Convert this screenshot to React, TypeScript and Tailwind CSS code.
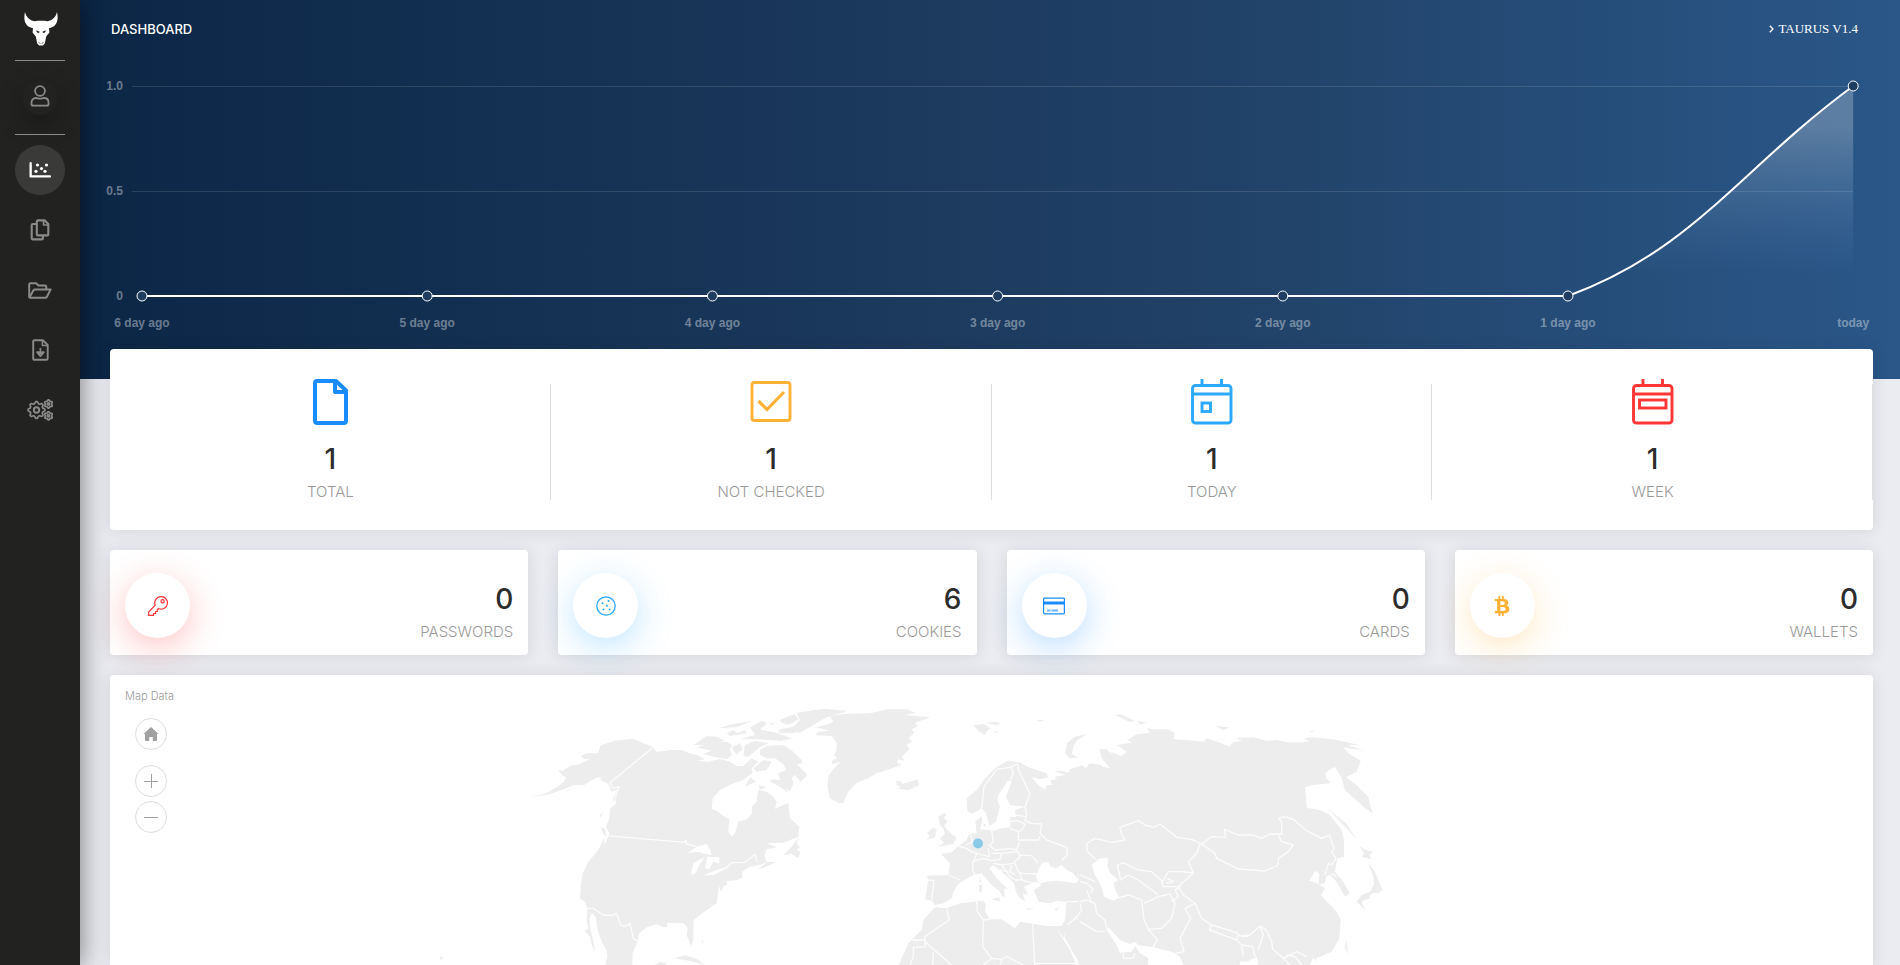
import type { ReactNode } from "react";
import { FaBtc } from "react-icons/fa";

type IconProps = { className?: string };

function BullLogo() {
  return (
    <svg viewBox="0 0 34 34" className="w-[34px] h-[34px] fill-white">
      <path d="M1 0C-.6 7 .6 13.5 6.5 15.6L9 16.2 8.600 20.500 11.800 24.500 13.200 31.500 15.200 33.600H18.800L20.800 31.500 22.200 24.500 25.400 20.500 25 16.200 27.500 15.600C33.400 13.500 34.600 7 33 0 31.600 5.500 28.500 8.300 23.500 9.200 19.500 8.600 14.500 8.600 10.500 9.200 5.500 8.300 2.400 5.500 1 0Z" />
      <path d="M12 18.200 15.600 19.800 15 21 13 20.500ZM22 18.200 18.400 19.800 19 21 21 20.500Z" fill="#222220" />
      <path d="M15 30.500 16 31.600M19 30.500 18 31.600" stroke="#222220" strokeWidth="1" />
    </svg>
  );
}

function UserIcon({ className }: IconProps) {
  return (
    <svg viewBox="0 0 20 22" className={className} fill="none" stroke="currentColor" strokeWidth="1.8">
      <circle cx="10" cy="6" r="4.900" />
      <path d="M6 13C3.200 13 1.500 15 1.500 17.500V19C1.500 20 2 20.700 3 20.700H17C18 20.700 18.500 20 18.500 19V17.500C18.500 15 16.800 13 14 13 12.600 13 11.800 13.700 10 13.700S7.400 13 6 13Z" />
    </svg>
  );
}

function ScatterIcon({ className }: IconProps) {
  return (
    <svg viewBox="0 0 22 16" className={className} fill="currentColor">
      <path d="M.5 1.200A1 1 0 0 1 2.800 1.200V13.200H21A1 1 0 0 1 21 15.500H1.500A1 1 0 0 1 .5 14.500Z" />
      <circle cx="8.500" cy="3" r="1.600" />
      <circle cx="17.500" cy="3" r="1.600" />
      <circle cx="12.500" cy="6.600" r="1.600" />
      <circle cx="7" cy="9.300" r="1.600" />
      <circle cx="16" cy="9.300" r="1.600" />
    </svg>
  );
}

function CopyIcon({ className }: IconProps) {
  return (
    <svg viewBox="0 0 20 22" className={className} fill="none" stroke="currentColor" strokeWidth="2.100" strokeLinejoin="round">
      <path d="M8 1.400H14.800L18.300 4.900V15.200Q18.300 16.400 17.100 16.400H8Q6.800 16.400 6.800 15.200V2.600Q6.800 1.400 8 1.400Z" />
      <path d="M13.600 1.400V6H18.300" strokeWidth="1.700" />
      <path d="M6.500 5H2.900Q1.700 5 1.700 6.200V19.200Q1.700 20.400 2.900 20.400H11.700Q12.900 20.400 12.900 19.200V16.800" />
    </svg>
  );
}

function FolderIcon({ className }: IconProps) {
  return (
    <svg viewBox="0 0 24 17" className={className} fill="none" stroke="currentColor" strokeWidth="2" strokeLinejoin="round">
      <path d="M1.200 15V2.500Q1.200 1.200 2.500 1.200H8.200L10.500 3.600H17Q18.300 3.600 18.300 4.900V7.400" />
      <path d="M1.400 15.600 5.500 8.200Q6 7.400 7 7.400H22.700L18.900 14.800Q18.400 15.800 17.400 15.800H2Q1.200 15.800 1.200 15" />
    </svg>
  );
}

function FileDownIcon({ className }: IconProps) {
  return (
    <svg viewBox="0 0 17 22" className={className} fill="none" stroke="currentColor" strokeWidth="1.900" strokeLinejoin="round">
      <path d="M2.200 1.200H10.800L15.700 6V19.500Q15.700 20.800 14.400 20.800H2.500Q1.200 20.800 1.200 19.500V2.400Q1.200 1.200 2.400 1.200Z" />
      <path d="M10.400 1.400V6.400H15.500" strokeWidth="1.500" />
      <path d="M8.400 9V14.500M5 13.200H6.800L8.400 14.600 10 13.200H11.900L8.400 17.200Z" strokeWidth="1.700" />
    </svg>
  );
}

function Gear({ x, y, size, teeth }: { x: number; y: number; size: number; teeth: number }) {
  const points = Array.from({ length: teeth * 4 }, (_, i) => {
    const r = i % 4 < 2 ? size : size * 0.78;
    const a = ((i - 0.5) * Math.PI) / (teeth * 2);
    return `${(x + r * Math.sin(a)).toFixed(2)},${(y - r * Math.cos(a)).toFixed(2)}`;
  });
  return <polygon points={points.join(" ")} />;
}

function GearsIcon({ className }: IconProps) {
  return (
    <svg viewBox="0 0 27 22" className={className} fill="none" stroke="currentColor" strokeWidth="1.700" strokeLinejoin="round">
      <Gear x={9.500} y={11} size={8.400} teeth={8} />
      <circle cx="9.500" cy="11" r="2.700" strokeWidth="1.900" />
      <Gear x={21.500} y={5} size={4.100} teeth={6} />
      <circle cx="21.500" cy="5" r="1.100" />
      <Gear x={21.500} y={16.800} size={4.100} teeth={6} />
      <circle cx="21.500" cy="16.800" r="1.100" />
    </svg>
  );
}

const navItems = [
  { label: "Dashboard", icon: <ScatterIcon className="w-[22px] h-4" />, active: true },
  { label: "Logs", icon: <CopyIcon className="w-5 h-[22px]" />, active: false },
  { label: "Files", icon: <FolderIcon className="w-6 h-[17px]" />, active: false },
  { label: "Loader", icon: <FileDownIcon className="w-[17px] h-[22px]" />, active: false },
  { label: "Settings", icon: <GearsIcon className="w-[27px] h-[22px]" />, active: false },
];

function Sidebar() {
  return (
    <aside className="relative z-10 w-20 shrink-0 min-h-screen bg-[#222220] flex flex-col items-center shadow-[0_2px_22px_0_rgba(0,0,0,0.2),0_2px_30px_0_rgba(0,0,0,0.35)]">
      <a href="#home" aria-label="Home" className="h-[60px] pt-3 pl-0.5">
        <BullLogo />
      </a>
      <hr className="w-[50px] border-[#8b8b8a]" />
      <a
        href="#profile"
        aria-label="Profile"
        className="mt-5 mb-[19px] pb-1 w-[34px] h-[34px] rounded-full flex items-center justify-center text-[#8b8b8a] shadow-[0_8px_24px_2px_rgba(0,0,0,0.25)]"
      >
        <UserIcon className="w-5 h-[22px]" />
      </a>
      <hr className="w-[50px] border-[#8b8b8a]" />
      <nav className="mt-2.5 flex flex-col gap-2.5">
        {navItems.map((item) => (
          <a
            key={item.label}
            href="#nav"
            aria-label={item.label}
            className={
              item.active
                ? "w-[50px] h-[50px] rounded-full flex items-center justify-center bg-[#3a3a38] text-white"
                : "w-[50px] h-[50px] rounded-full flex items-center justify-center text-[#8b8b8a]"
            }
          >
            {item.icon}
          </a>
        ))}
      </nav>
    </aside>
  );
}

const days = ["6 day ago", "5 day ago", "4 day ago", "3 day ago", "2 day ago", "1 day ago", "today"];

function ActivityChart() {
  const base = 238;
  const top = 28;
  const xs = days.map((_, i) => 62 + i * 285.2);
  const rise = `C1614 191.500 1659 112 ${xs[6]} ${top}`;

  return (
    <svg viewBox="0 0 1820 321" className="block w-full h-auto">
      <defs>
        <linearGradient id="area" gradientUnits="userSpaceOnUse" x1="0" y1="218" x2="0" y2="68">
          <stop offset="0" stopColor="#80b6f4" stopOpacity="0" />
          <stop offset="1" stopColor="#ffffff" stopOpacity="0.24" />
        </linearGradient>
      </defs>
      <path d="M52 28.500H1773M52 133.500H1773" stroke="#ffffff" strokeOpacity="0.12" />
      <g fontFamily="Liberation Sans, Arial, sans-serif" fontSize="12" fontWeight="700" fill="#ffffff" fillOpacity="0.4">
        <text x="43" y="32" textAnchor="end">1.0</text>
        <text x="43" y="137" textAnchor="end">0.5</text>
        <text x="43" y="242" textAnchor="end">0</text>
        {days.map((day, i) => (
          <text key={day} x={xs[i]} y="269" textAnchor="middle">
            {day}
          </text>
        ))}
      </g>
      <path d={`M${xs[5]} ${base}${rise}V${base}Z`} fill="url(#area)" />
      <path d={`M${xs[0]} ${base}H${xs[5]}${rise}`} fill="none" stroke="#ffffff" strokeWidth="2" />
      {xs.map((x, i) => (
        <circle key={x} cx={x} cy={i === 6 ? top : base} r="5" fill="#1e3d60" stroke="#ffffff" />
      ))}
    </svg>
  );
}

const stats = [
  {
    label: "TOTAL",
    icon: (
      <svg viewBox="0 0 46 46" className="w-[46px] h-[46px]" fill="none" stroke="#1a8cff" strokeWidth="4" strokeLinejoin="round">
        <path d="M10 2H29L39 11.500V41.500Q39 44 36.500 44H10.500Q8 44 8 41.500V4Q8 2 10 2Z" />
        <path d="M28 2V13H39" />
      </svg>
    ),
  },
  {
    label: "NOT CHECKED",
    icon: (
      <svg viewBox="0 0 46 46" className="w-[46px] h-[46px]" fill="none" stroke="#ffb236" strokeWidth="2.900">
        <rect x="4" y="3.500" width="38" height="38" rx="2.500" />
        <path d="M10.500 22 19 30.500 36 13" strokeWidth="3.200" />
      </svg>
    ),
  },
  {
    label: "TODAY",
    icon: (
      <svg viewBox="0 0 46 46" className="w-[46px] h-[46px]" fill="none" stroke="#2ca8ff" strokeWidth="2.900">
        <rect x="3.500" y="6.500" width="38.500" height="37.500" rx="3" />
        <path d="M3.500 15H42M13 0V6.500M32.500 0V6.500" />
        <rect x="13" y="24" width="8.500" height="8.500" />
      </svg>
    ),
  },
  {
    label: "WEEK",
    icon: (
      <svg viewBox="0 0 46 46" className="w-[46px] h-[46px]" fill="none" stroke="#ff3636" strokeWidth="2.900">
        <rect x="3.500" y="6.500" width="38.500" height="37.500" rx="3" />
        <path d="M3.500 15H42M13 0V6.500M32.500 0V6.500" />
        <rect x="9.500" y="21" width="26.500" height="8" />
      </svg>
    ),
  },
];

const totals = [
  {
    label: "PASSWORDS",
    value: 0,
    glow: "shadow-[0_9px_35px_0_rgba(255,54,54,0.3)] text-[#ff3636]",
    icon: (
      <svg viewBox="0 0 20 20" className="w-5 h-5" fill="none" stroke="currentColor" strokeWidth="1.200">
        <path d="M13 .7A6.200 6.200 0 0 0 7.200 9.200L.7 16V19.300H5.500V17.500H7.500V15.500H9.300V13.800L10.600 12.500A6.200 6.200 0 1 0 13 .7Z" />
        <circle cx="14.600" cy="5.200" r="1.600" />
      </svg>
    ),
  },
  {
    label: "COOKIES",
    value: 6,
    glow: "shadow-[0_9px_35px_0_rgba(44,168,255,0.3)] text-[#2ca8ff]",
    icon: (
      <svg viewBox="0 0 20 20" className="w-5 h-5" fill="currentColor">
        <circle cx="10" cy="10" r="9.200" fill="none" stroke="currentColor" strokeWidth="1.300" />
        <circle cx="12.500" cy="5" r="1" />
        <circle cx="6.500" cy="7.200" r="1" />
        <circle cx="11" cy="9.800" r="1" />
        <circle cx="7.500" cy="13.500" r="1" />
        <circle cx="13.600" cy="13.500" r="1" />
      </svg>
    ),
  },
  {
    label: "CARDS",
    value: 0,
    glow: "shadow-[0_9px_35px_0_rgba(26,140,255,0.3)] text-[#1a8cff]",
    icon: (
      <svg viewBox="0 0 22 18" className="w-[22px] h-[18px]">
        <rect x=".6" y="1.100" width="20.800" height="15.800" rx=".8" fill="none" stroke="currentColor" strokeWidth="1.200" />
        <path d="M1 4.500H21V7.500H1Z" fill="currentColor" />
        <path d="M4 13.500H7.500M8.500 13.500H15" stroke="currentColor" strokeWidth="1.800" strokeOpacity=".65" />
      </svg>
    ),
  },
  {
    label: "WALLETS",
    value: 0,
    glow: "shadow-[0_9px_35px_0_rgba(255,178,54,0.3)] text-[#ffb236]",
    icon: <FaBtc className="w-5 h-5" />,
  },
];

function Card({ className, children }: { className: string; children: ReactNode }) {
  return <section className={`bg-white shadow-[0_1px_15px_1px_rgba(39,39,39,0.1)] ${className}`}>{children}</section>;
}

// Land is traced per region on a grid of three units to the pixel
const northAmerica =
  "M610,146 555,152 512,166 504,190 470,190 453,198 462,207 480,208 448,222 420,228 398,242 385,240 395,255 408,262 402,275 390,285 350,310 303,322 350,315 405,296 430,286 462,285 495,265 510,262 515,272 535,282 545,305 560,300 550,330 558,342 540,355 538,385 528,410 538,430 530,450 524,463 522,445 505,480 475,515 458,550 452,590 450,625 465,637 472,655 470,690 475,715 463,722 480,740 485,765 495,785 488,745 482,720 478,690 485,668 497,680 503,720 510,740 515,755 530,780 532,800 525,825 525,850 620,850 607,825 608,790 622,755 628,730 650,712 680,703 700,712 712,710 712,698 760,700 767,706 773,715 770,735 783,768 790,750 791,690 830,660 860,640 864,610 867,588 874,605 880,590 892,583 890,573 920,570 938,562 936,545 960,530 985,525 1010,518 985,538 1000,533 1040,516 1010,515 1003,498 1010,478 1040,472 1010,460 1060,458 1105,440 1108,410 1080,385 1075,340 1060,345 1035,357 1040,335 1030,320 1010,305 985,300 980,335 965,350 967,370 950,388 925,395 915,430 905,438 895,425 898,388 880,378 860,362 845,357 848,325 870,300 905,282 940,270 968,248 965,235 985,215 965,205 940,228 920,228 900,215 870,207 835,215 800,212 825,208 800,195 775,188 755,180 725,180 680,186 668,170 640,160Z" +
  "M1105,442 1085,470 1060,495 1085,492 1105,505 1111,485 1100,480 1110,472 1100,462Z" +
  "M790,165 830,138 860,140 885,152 825,165ZM800,172 850,158 890,155 905,165 900,180 905,195 890,207 850,200 820,192 845,182Z" +
  "M990,180 1010,168 1060,165 1090,185 1115,210 1118,220 1100,222 1118,240 1132,255 1112,275 1095,255 1085,262 1090,280 1080,305 1068,295 1075,310 1050,290 1020,275 1025,268 1050,270 1045,250 1068,240 1060,222 1035,205 1010,205 990,195Z" +
  "M1000,210 1025,215 1010,240 980,245 970,235ZM960,262 978,275 945,290ZM985,285 1010,290 990,300Z" +
  "M865,115 905,103 965,93 920,112ZM890,130 910,120 922,130 945,120 950,130 900,138ZM960,112 995,92 1012,100 990,118 1040,128 1085,145 1050,152 990,148 930,148 975,135ZM1050,90 1095,73 1105,88 1080,103 1055,98ZM905,172 930,160 938,178 920,195ZM945,165 975,152 1015,160 990,172 955,200 940,198ZM1020,100 1035,98 1025,106Z" +
  "M1100,70 1150,62 1180,56 1250,62 1190,82 1150,105 1110,128 1080,125 1040,120 1090,110 1110,90Z" +
  "M513,410 525,418 530,440 518,428ZM735,805 765,796 800,806 825,825 790,815ZM672,825 690,817 710,818 700,850 672,850ZM30,797 40,803 32,812ZM403,303 428,296 410,304ZM808,750 820,752 818,762 815,752ZM510,375 520,365 512,385Z";

const americaLakes =
  "M772,488 800,470 830,462 842,482 845,495 825,492 808,486ZM783,555 790,520 825,500 815,515 803,535 797,550ZM832,500 868,502 868,520 850,515 838,538 825,535ZM820,556 860,540 905,528 880,540 850,555Z";

const americaBorders =
  "M668,173 540,278 548,295 567,290 558,315 555,345M528,437 765,457 768,450 770,462 800,470M865,540 890,532 905,518 945,517 975,493 982,518M470,655 490,655 520,675 545,677 560,670 572,705 585,710 600,700 610,745 622,753";

const europe =
  "M560,325 590,300 615,265 650,230 685,212 722,218 745,232 800,250 805,262 780,268 755,262 775,285 795,300 800,285 815,285 812,270 830,268 825,260 855,255 822,243 845,242 865,248 870,238 905,226 918,235 930,220 965,225 965,850 905,850 905,825 880,790 855,745 858,720 852,745 832,720 870,780 900,850 350,850 360,815 385,760 425,720 430,690 465,652 500,655 540,640 610,632 618,645 615,665 630,688 665,688 705,715 720,695 750,700 800,708 845,708 855,690 858,655 860,635 830,632 810,640 775,635 762,600 785,585 765,575 745,585 732,590 745,615 728,610 735,632 720,625 708,605 702,580 690,568 665,545 640,525 628,535 655,570 685,598 672,595 675,622 668,618 655,600 635,585 605,550 580,555 550,572 535,582 520,605 515,625 490,640 465,645 455,632 435,628 440,600 445,570 440,557 505,555 510,520 483,492 515,487 535,468 560,450 567,432 590,430 586,395 605,378 607,395 600,418 640,422 665,415 690,412 692,395 690,380 708,382 705,360 735,350 690,345 678,320 695,275 683,272 672,290 655,315 652,330 660,350 648,395 628,408 618,370 605,355 575,372 562,362Z" +
  "M50,68 130,57 200,65 140,80 100,100 60,120 40,130 -5,128 0,120 45,112 70,90ZM0,90 35,75 50,85 20,105ZM0,143 38,146 0,152Z" +
  "M150,78 190,72 270,70 320,58 380,58 408,68 375,75 450,82 405,98 415,108 395,118 402,128 385,145 398,155 380,165 388,178 365,200 375,213 355,208 350,218 365,225 320,240 290,250 265,265 230,278 205,305 190,338 178,340 150,325 142,290 145,258 160,238 182,215 155,222 158,210 172,205 162,195 170,180 170,160 155,138 108,136 112,126 150,122 108,112 145,103 160,95Z" +
  "M348,272 365,275 365,282 400,272 412,268 418,285 385,301 355,296 362,290 350,285Z" +
  "M580,106 610,102 632,115 622,122 615,136 595,122ZM615,98 640,95 665,99 650,105ZM640,122 658,127 645,128ZM770,90 795,90 780,95ZM920,132 885,140 862,158 855,190 870,205 895,203 875,193 880,170 890,152Z" +
  "M475,380 492,368 500,375 490,383 502,393 493,408 512,430 530,443 520,462 475,470 492,458 480,445 495,432 490,415 480,405ZM460,412 470,418 465,442 440,450 450,437 440,430Z" +
  "M635,627 658,622 660,635ZM597,585 606,585 605,608 597,606ZM600,562 604,575 598,577ZM740,654 765,656 742,659ZM822,658 840,650 830,662ZM610,400 620,405 612,411Z";

const blackSea =
  "M768,560 775,540 785,520 805,515 810,528 825,535 845,525 860,540 880,550 895,570 890,580 830,572 800,575 775,582Z";

const europeBorders =
  "M605,355 612,290 650,238 690,232 712,222 718,245 750,312 735,350 740,375 735,392 755,400 785,402 780,430 800,450 860,472 862,495 845,512M692,232 700,245 690,275M705,375 735,380M690,395 712,392 735,402 728,418 715,425 715,450 775,450 780,440M690,415 715,425M635,422 640,455 628,465 645,480 665,478 690,475 710,480 718,458M535,468 560,475 575,485 590,490 578,520 578,540 585,555M590,490 628,500 625,475M578,515 610,505 635,512 660,508 665,490 635,490M505,555 540,570M445,570 462,572 455,632M665,490 715,485 720,500 700,520 665,525 640,520M720,495 755,497 775,520M705,520 715,545 725,550 770,552M665,525 690,560 705,570 720,570M695,525 690,545 705,555M720,550 725,570 760,580M570,430 578,455 555,465" +
  "M895,570 895,550 935,565 960,572M900,580 925,600 928,625 890,635 860,635M928,625 940,650 960,685M908,635 905,665 880,690 862,705M890,685 920,700 955,725M500,655 508,690 470,715 435,740 435,770 400,772 400,800 390,825M435,755 515,825M458,830 460,785M395,750 435,750M590,632 592,665 610,690 608,770 635,805 610,825M610,690 630,688M635,805 665,808 680,800 730,825M758,700 765,850M765,820 900,820M665,810 660,825M960,445 930,455 918,490 950,512" +
  "M925,590 960,580M640,530 655,540 685,545";

const asia =
  "M-5,235 30,238 25,222 90,235 65,205 58,178 80,178 95,195 120,215 135,235 130,255 120,255 115,225 90,185 125,198 140,185 110,165 155,158 142,150 170,133 210,128 200,115 220,118 265,118 285,130 280,148 320,150 370,155 380,145 420,158 450,170 455,158 485,153 470,143 520,142 560,152 590,150 630,158 690,155 672,145 700,142 760,148 838,165 805,165 850,182 790,172 805,190 842,212 830,245 812,255 798,262 830,285 865,320 870,345 878,370 850,350 795,300 785,265 765,230 752,238 735,250 740,265 752,280 700,285 675,292 680,353 720,360 750,375 785,420 792,450 792,500 772,505 765,545 790,575 810,610 795,620 775,585 765,570 750,555 738,560 735,580 715,585 718,550 705,543 688,572 708,578 735,595 722,615 770,665 782,690 778,745 755,785 720,800 708,805 708,815 700,802 680,850 540,850 530,800 500,815 480,815 475,850 320,850 300,800 275,785 220,772 175,765 165,755 150,762 120,750 85,712 80,720 110,765 120,788 155,785 165,768 180,790 205,805 200,850 -5,850Z" +
  "M865,520 885,545 908,600 895,610 880,608 855,630 845,635 855,660 830,635 845,615 870,605 882,585 880,560ZM838,468 862,482 880,485 868,495 875,508 845,500 852,490ZM740,353 800,402 830,448 795,410ZM800,750 804,795 795,770ZM108,76 120,72 165,92 150,97ZM172,92 200,98 180,104ZM405,108 450,112 430,120ZM455,110 485,112ZM455,130 475,133ZM685,122 705,124 695,127ZM-5,140 20,133 0,143ZM855,620 875,620 860,630Z";

const caspian = "M35,525 60,505 85,505 82,528 90,548 115,570 102,578 105,600 118,622 100,632 72,620 65,590 45,555Z";

const asiaBorders =
  "M20,460 45,445 95,457 135,450 125,435 120,412 175,392 195,405 220,412 240,402 290,442 335,448 365,462 395,440 437,442 433,418 475,435 520,435 545,445 570,432 605,432 605,395 595,385 615,380 640,388 680,422 725,445 748,435 762,475 755,485 768,505 755,525 745,520 735,555M20,460 22,485 50,510M365,462 405,490 410,505 475,537 555,543 595,525 595,505 625,485 640,465 605,455 595,435M360,462 350,490 325,515 340,548 300,545 265,545 248,575 215,545 175,540 130,518 112,525 122,570 145,555 175,570 235,615M340,548 295,590 310,615 345,640 365,685 395,705 470,728 480,738 510,735 540,708 560,722 575,755 578,778 610,805 650,785 680,800M112,625 145,615 185,630 192,690 205,718 245,715 275,685 285,640 270,612 235,620 192,640M205,718 232,750 218,772M345,640 315,655 332,685 300,745 312,785 285,790M395,705 388,720 470,750 475,735 488,740 505,740M470,750 485,765 518,770 525,800M485,765 490,800M540,708 550,735 535,780M610,805 630,825M620,795 645,800 665,825M245,575 250,590 300,590 285,600 295,620 275,635M262,565 280,575 258,580M0,575 20,580 40,598 30,610M0,635 20,630 45,640 50,670 75,690 80,720M0,695 50,725 75,725M0,640 5,660 -5,675M130,790 130,805 160,805 165,790M20,600 35,640M755,550 770,560M0,555 25,565 45,575";

function WorldMap() {
  return (
    <svg viewBox="0 0 1763 290" className="absolute inset-x-0 top-0 w-full h-auto">
      <g fill="#ededed" strokeLinejoin="round">
        <g transform="translate(320 15) scale(0.33333)">
          <path d={northAmerica} />
          <path d={americaLakes} fill="#ffffff" />
          <path d={americaBorders} fill="none" stroke="#fcfcfc" strokeWidth="4" />
        </g>
        <g transform="translate(670 15) scale(0.33333)">
          <path d={europe} />
          <path d={blackSea} fill="#ffffff" />
          <path d={europeBorders} fill="none" stroke="#fcfcfc" strokeWidth="4" />
        </g>
        <g transform="translate(970 15) scale(0.33333)">
          <path d={asia} />
          <path d={caspian} fill="#ffffff" />
          <path d={asiaBorders} fill="none" stroke="#fcfcfc" strokeWidth="4" />
        </g>
      </g>
      <circle cx="868" cy="168.500" r="5" fill="#8bc9e8" />
    </svg>
  );
}

const mapButton =
  "w-8 h-8 rounded-full border border-[#dedede] bg-white flex items-center justify-center text-[#a0a0a0]";

function MapControls() {
  return (
    <div className="relative mt-3 ml-2.5 w-8 flex flex-col">
      <button type="button" aria-label="Reset view" className={mapButton}>
        <svg viewBox="0 0 16 14" className="w-4 h-3.5 fill-current">
          <path d="M8 0 15.500 7H14V13Q14 14 13 14H9.800V10H6.200V14H3Q2 14 2 13V7H.5Z" />
        </svg>
      </button>
      <button type="button" aria-label="Zoom in" className={`${mapButton} mt-[15px]`}>
        <svg viewBox="0 0 14 14" className="w-3.5 h-3.5" stroke="currentColor">
          <path d="M7.500 0V14M0 7.500H14" />
        </svg>
      </button>
      <button type="button" aria-label="Zoom out" className={`${mapButton} mt-1`}>
        <svg viewBox="0 0 14 14" className="w-3.5 h-3.5" stroke="currentColor">
          <path d="M0 7.500H14" />
        </svg>
      </button>
    </div>
  );
}

export default function App() {
  return (
    <div className="h-screen overflow-hidden flex bg-[#ebecf1] font-['Inter',sans-serif] text-[#2c2c2c]">
      <Sidebar />
      <main className="flex-1 min-w-0 flex flex-col">
        <header className="bg-[linear-gradient(90deg,#0c2646_0%,#204065_60%,#2a5788_100%)] text-white">
          <div className="h-[58px] pl-[31px] pr-[42px] flex items-center justify-between">
            <h1 className="text-[13px] leading-5 font-medium">DASHBOARD</h1>
            <p className="flex items-center gap-1 text-[13px] leading-5 font-['Liberation_Serif',serif]">
              <svg viewBox="0 0 5 8" className="w-[5px] h-2" fill="none" stroke="currentColor" strokeWidth="1.300">
                <path d="M.8 .8 4 4 .8 7.200" />
              </svg>
              TAURUS V1.4
            </p>
          </div>
          <ActivityChart />
        </header>

        <div className="relative flex-1 flex flex-col gap-5 -mt-[30px] pl-[30px] pr-[27px]">
          <Card className="rounded-sm grid grid-cols-4">
            {stats.map((stat) => (
              <div
                key={stat.label}
                className="relative flex flex-col items-center pt-[30px] pb-[26px] after:absolute after:right-0 after:top-[35px] after:bottom-[30px] after:w-px after:bg-[#dddddd]"
              >
                {stat.icon}
                <h3 className="mt-4 text-[28px] leading-9 font-medium">1</h3>
                <h6 className="mt-[3px] text-[15px] leading-6 font-light text-[#9a9a9a]">{stat.label}</h6>
              </div>
            ))}
          </Card>

          <div className="grid grid-cols-4 gap-[30px]">
            {totals.map((total) => (
              <Card key={total.label} className="rounded-sm flex justify-between px-[15px] pt-[23px] pb-[11px]">
                <div className={`w-[65px] h-[65px] rounded-full bg-white flex items-center justify-center ${total.glow}`}>
                  {total.icon}
                </div>
                <div className="pt-2 text-right">
                  <h3 className="text-[28px] leading-9 font-medium">{total.value}</h3>
                  <h6 className="mt-[3px] text-[15px] leading-6 font-light text-[#9a9a9a]">{total.label}</h6>
                </div>
              </Card>
            ))}
          </div>

          <Card className="relative flex-1 overflow-hidden rounded-t-sm px-[15px] pt-[11px]">
            <WorldMap />
            <h5 className="relative text-[11px] leading-5 font-light text-[#9a9a9a]">Map Data</h5>
            <MapControls />
          </Card>
        </div>
      </main>
    </div>
  );
}
